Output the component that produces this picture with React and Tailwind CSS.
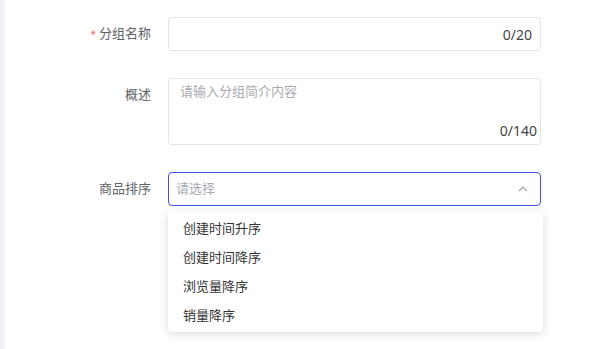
import React from "react";

const font = { fontFamily: '"Noto Sans", "Noto Sans CJK SC", sans-serif' };

export default function App() {
  const items = ["创建时间升序", "创建时间降序", "浏览量降序", "销量降序"];
  return (
    <div
      className="flex h-[349px] w-[610px] overflow-hidden bg-white text-[13px] text-[#606266]"
      style={font}
    >
      <div className="w-[5px] shrink-0 bg-[#f1f1f6]" />
      <div className="flex flex-col pt-[17px]">
        {/* Row 1 */}
        <div className="flex">
          <div className="flex h-[34px] w-[146px] items-center justify-end">
            <span className="mr-[3px] text-[10px] text-[#f56c6c]">*</span>
            <span>分组名称</span>
          </div>
          <div className="ml-[17px] flex h-[34px] w-[373px] items-center justify-end rounded-[3px] border border-[#e4e6eb] pr-[8px]">
            <span className="text-[14px] text-[#444]">0/20</span>
          </div>
        </div>
        {/* Row 2 */}
        <div className="mt-[27px] flex">
          <div className="flex h-[34px] w-[146px] items-center justify-end">
            <span>概述</span>
          </div>
          <div className="relative ml-[17px] h-[67px] w-[373px] rounded-[3px] border border-[#e4e6eb] px-[11px] pt-[3px]">
            <span className="text-[#a8abb2]">请输入分组简介内容</span>
            <span className="absolute bottom-[3px] right-[3px] text-[14px] text-[#444]">0/140</span>
          </div>
        </div>
        {/* Row 3 */}
        <div className="mt-[27px] flex">
          <div className="flex h-[34px] w-[146px] items-center justify-end">
            <span>商品排序</span>
          </div>
          <div className="relative ml-[17px] w-[373px]">
            <div className="flex h-[34px] items-center justify-between rounded-[4px] border border-[#4050f0] pl-[7px] pr-[12px]">
              <span className="text-[#a8abb2]">请选择</span>
              <svg width="10" height="6" viewBox="0 0 10 6" fill="none">
                <path d="M1 5 L5 1 L9 5" stroke="#a0a3aa" strokeWidth="1.2" />
              </svg>
            </div>
            <div className="absolute left-0 top-[39px] w-[375px] rounded-[4px] bg-white pb-[2px] pt-[3px] shadow-[0_2px_8px_rgba(0,0,0,0.15)]">
              {items.map((t) => (
                <div key={t} className="flex h-[29px] items-center pl-[15px] text-[#333]">
                  {t}
                </div>
              ))}
            </div>
          </div>
        </div>
      </div>
    </div>
  );
}
